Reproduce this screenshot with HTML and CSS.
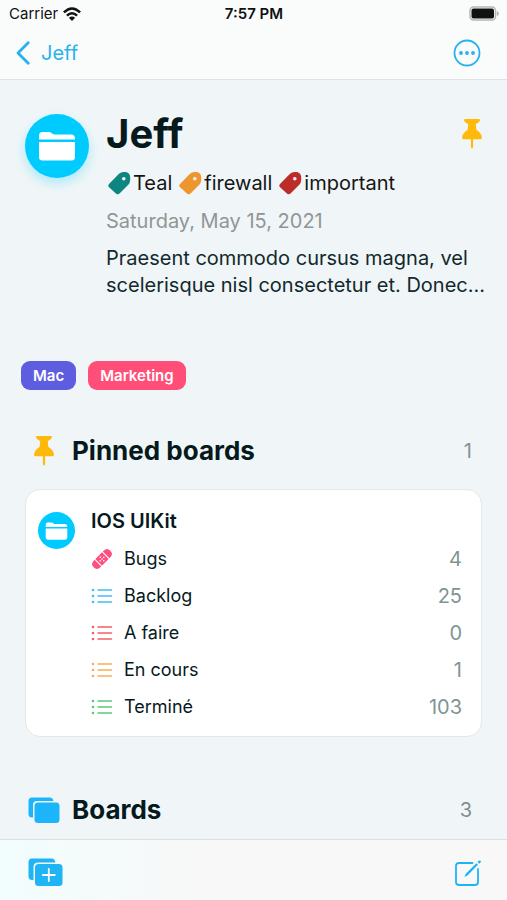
FILE: index.html
```html
<!DOCTYPE html>
<html lang="en">
<head>
<meta charset="utf-8">
<meta name="viewport" content="width=device-width, initial-scale=1">
<title>Jeff</title>
<link rel="stylesheet" href="styles.css">
</head>
<body>
<svg class="sprite" aria-hidden="true">
  <symbol id="folder" viewBox="0 0 38 30">
    <path d="M1 8V4.500Q1 1 4.500 1H11Q12.500 1 13.500 2L14.500 2.800Q15.300 3.500 16.500 3.500H33Q37 3.500 37 7.500V8.500H1Z"/>
    <path d="M1 11H37V26Q37 29.500 33.500 29.500H4.500Q1 29.500 1 26Z"/>
  </symbol>
  <symbol id="tag" viewBox="0 0 24 24">
    <path fill-rule="evenodd" d="M2 13L12 2.800Q14 1 16.500 1H19Q23 2 23.200 6V9Q23 12 21.500 13.500L12.500 22.500Q11 24 9.200 22.700L1.800 16Q.400 14.500 2 13ZM16.800 6A1.800 1.800 0 1 0 16.800 9.600A1.800 1.800 0 1 0 16.800 6Z"/>
  </symbol>
  <symbol id="pin" viewBox="0 0 20 30">
    <path d="M3.200 0H16.800Q18 0 18 1.200Q18 2.800 13.800 5.200L14.400 11Q19.500 14 20 18.500Q20 20.300 18.500 20.300H1.500Q0 20.300 0 18.500Q.500 14 5.600 11L6.200 5.200Q2 2.800 2 1.200Q2 0 3.200 0ZM8.900 20H11.100V28L10 30L8.900 28Z"/>
  </symbol>
  <symbol id="list" viewBox="0 0 22 16">
    <path d="M7 2H20.500M7 8H20.500M7 14H20.500" fill="none" stroke="currentColor" stroke-width="1.500" stroke-linecap="round"/>
    <circle cx="2" cy="2" r="1.300"/><circle cx="2" cy="8" r="1.300"/><circle cx="2" cy="14" r="1.300"/>
  </symbol>
  <symbol id="stack" viewBox="0 0 32 27">
    <path d="M4 .500H21.500Q25 .500 25.500 4H9Q5 4 5 8V20.500H4Q.500 20.500 .500 17V4Q.500 .500 4 .500Z"/>
    <rect x="6.500" y="5.500" width="25" height="20.500" rx="3.500"/>
  </symbol>
</svg>

<div class="app">
  <header class="top">
    <div class="status">
      <span class="carrier">Carrier
        <svg class="wifi" viewBox="0 0 18 14" aria-hidden="true"><g fill="none" stroke="currentColor" stroke-width="2.400"><path d="M.900 5.400Q9-2.400 17.100 5.400"/><path d="M3.900 8.700Q9 3.800 14.100 8.700"/></g><path d="M9 14L5.900 10.700Q9 8.100 12.100 10.700Z"/></svg>
      </span>
      <span class="clock">7:57 PM</span>
      <svg class="battery" viewBox="0 0 30 15" aria-hidden="true"><rect x="1" y="1" width="25.500" height="13" rx="3.500" fill="none" stroke="#b4b6b6" stroke-width="1.500"/><rect x="2.500" y="2.500" width="22.500" height="10" rx="2"/><path d="M27.800 5Q30 6 30 7.500T27.800 10Z" fill="#b4b6b6"/></svg>
    </div>
    <nav class="nav">
      <a class="back" href="#"><svg class="chevron" viewBox="0 0 14 24" aria-hidden="true"><path d="M12.200 1.800L2 12L12.200 22.200" fill="none" stroke="currentColor" stroke-width="2.800" stroke-linecap="round" stroke-linejoin="round"/></svg>Jeff</a>
      <button class="icon-button" aria-label="More"><svg class="more" viewBox="0 0 28 28" aria-hidden="true"><circle cx="14" cy="14" r="12.500" fill="none" stroke="currentColor" stroke-width="1.800"/><circle cx="8" cy="14" r="1.900"/><circle cx="14" cy="14" r="1.900"/><circle cx="20" cy="14" r="1.900"/></svg></button>
    </nav>
  </header>

  <main class="content">
    <section class="profile">
      <span class="avatar"><svg class="avatar-folder" aria-hidden="true"><use href="#folder"/></svg></span>
      <div class="profile-text">
        <div class="title-row">
          <h1>Jeff</h1>
          <svg class="pin" aria-hidden="true"><use href="#pin"/></svg>
        </div>
        <ul class="tags">
          <li><svg class="tag teal" aria-hidden="true"><use href="#tag"/></svg>Teal</li>
          <li><svg class="tag orange" aria-hidden="true"><use href="#tag"/></svg>firewall</li>
          <li><svg class="tag red" aria-hidden="true"><use href="#tag"/></svg>important</li>
        </ul>
        <time class="date" datetime="2021-05-15">Saturday, May 15, 2021</time>
        <p class="summary">Praesent commodo cursus magna, vel scelerisque nisl consectetur et. Donec...</p>
      </div>
    </section>

    <div class="chips">
      <span class="chip indigo">Mac</span>
      <span class="chip pink">Marketing</span>
    </div>

    <section>
      <div class="section-head">
        <span class="section-icon"><svg class="pin" aria-hidden="true"><use href="#pin"/></svg></span>
        <h2>Pinned boards</h2>
        <span class="count">1</span>
      </div>
      <article class="card">
        <span class="avatar small"><svg class="avatar-folder" aria-hidden="true"><use href="#folder"/></svg></span>
        <div class="card-body">
          <h3>IOS UIKit</h3>
          <ul class="lists">
            <li><svg class="row-icon bandage" viewBox="0 0 22 22" aria-hidden="true"><g transform="rotate(-45 11 11)"><path d="M5.200 6.300V15.700H4Q-.800 15.700-.800 11T4 6.300ZM16.800 6.300V15.700H18Q22.800 15.700 22.800 11T18 6.300Z"/><rect x="6.300" y="6.300" width="9.400" height="9.400"/><g fill="#fff"><circle cx="11" cy="8.500" r=".800"/><circle cx="8.500" cy="11" r=".800"/><circle cx="11" cy="11" r=".800"/><circle cx="13.500" cy="11" r=".800"/><circle cx="11" cy="13.500" r=".800"/></g></g></svg><span>Bugs</span><span class="count">4</span></li>
            <li><svg class="row-icon list blue" aria-hidden="true"><use href="#list"/></svg><span>Backlog</span><span class="count">25</span></li>
            <li><svg class="row-icon list coral" aria-hidden="true"><use href="#list"/></svg><span>A faire</span><span class="count">0</span></li>
            <li><svg class="row-icon list amber" aria-hidden="true"><use href="#list"/></svg><span>En cours</span><span class="count">1</span></li>
            <li><svg class="row-icon list green" aria-hidden="true"><use href="#list"/></svg><span>Terminé</span><span class="count">103</span></li>
          </ul>
        </div>
      </article>
    </section>

    <section class="boards">
      <div class="section-head">
        <span class="section-icon"><svg class="stack" aria-hidden="true"><use href="#stack"/></svg></span>
        <h2>Boards</h2>
        <span class="count gray">3</span>
      </div>
    </section>
  </main>

  <footer class="toolbar">
    <button class="icon-button" aria-label="Add board"><svg class="add" viewBox="0 0 35 29" aria-hidden="true"><path d="M4 .500H23.500Q27 .500 27.300 4.500H10Q5.500 4.500 5.500 9V22H4Q.500 22 .500 18V4Q.500 .500 4 .500Z"/><rect x="7" y="6" width="27.500" height="22" rx="3.500"/><path d="M20.800 11V23M14.800 17H26.800" stroke="#fff" stroke-width="1.800" stroke-linecap="round"/></svg></button>
    <button class="icon-button" aria-label="Compose"><svg class="compose" viewBox="0 0 28 28" aria-hidden="true"><g fill="none" stroke="currentColor" stroke-width="1.800" stroke-linecap="round"><path d="M18.500 4H5Q2 4 2 7V23Q2 26 5 26H21Q24 26 24 23V10"/></g><path d="M10.500 18L11.700 14.800L22.400 4.200L24 5.800L13.500 16.500ZM23.500 3L24.700 1.800Q25.800 1 26.600 1.800T26.500 3.500L25.200 4.700Z"/></svg></button>
  </footer>
</div>
</body>
</html>
```
FILE: styles.css
```css
* { box-sizing: border-box; }
body {
  margin: 0;
  background: #f0f6f7;
  color: #06191d;
  font-family: Inter, "Liberation Sans", sans-serif;
  font-size: 20px;
}
h1, h2, h3, p, ul { margin: 0; padding: 0; }
ul { list-style: none; }
svg { display: block; flex: none; fill: currentColor; }
.sprite { position: absolute; width: 0; height: 0; }

.app { height: 100vh; display: flex; flex-direction: column; }
.top { background: #fafcfc; border-bottom: 1px solid #e0e3e4; }
.status {
  display: grid;
  grid-template-columns: 1fr auto 1fr;
  align-items: center;
  height: 27px;
  padding: 0 8px 0 9px;
  color: #111;
  font-size: 15px;
}
.carrier { display: flex; align-items: center; gap: 5px; }
.wifi { width: 18px; height: 14px; }
.clock { font-weight: 600; }
.battery { width: 30px; height: 15px; justify-self: end; }
.nav {
  display: flex;
  align-items: center;
  justify-content: space-between;
  height: 52px;
  padding: 0 26px 0 16px;
  color: #28b1ee;
}
.back { display: flex; align-items: center; gap: 11px; color: inherit; text-decoration: none; }
.chevron { width: 14px; height: 24px; }
.icon-button { padding: 0; border: 0; background: none; color: inherit; }
.more { width: 28px; height: 28px; }

.content { flex: 1; min-height: 0; overflow: hidden; padding: 30px 25px 0; }
.profile { display: flex; gap: 17px; }
.avatar {
  display: flex;
  flex: none;
  align-items: center;
  justify-content: center;
  width: 64px;
  height: 64px;
  margin-top: 4px;
  border-radius: 50%;
  background: #00cbff;
  color: #fff;
  box-shadow: 0 5px 12px rgba(0, 203, 255, .3);
}
.avatar-folder { width: 38px; height: 30px; }
.avatar.small { width: 37px; height: 37px; box-shadow: none; }
.small .avatar-folder { width: 23px; height: 18px; }
.profile-text { flex: 1; min-width: 0; }
.title-row { display: flex; align-items: center; justify-content: space-between; height: 48px; }
h1 { font-size: 40px; line-height: 48px; font-weight: 700; }
.pin { width: 20px; height: 30px; color: #ffb90a; }
.tags { display: flex; gap: 6px; margin-top: 11px; padding-left: 1px; line-height: 28px; color: #151515; }
.tags li { display: flex; align-items: center; gap: 2px; }
.tag { width: 24px; height: 24px; }
.teal { color: #0d8580; }
.orange { color: #ee962e; }
.red { color: #bd2c29; }
.date { display: block; margin-top: 10px; line-height: 28px; color: #929596; }
.summary { margin: 10px -20px 0 0; line-height: 27px; color: #12292d; }

.chips { display: flex; gap: 12px; margin: 62px 0 45px -4px; }
.chip {
  padding: 0 12px;
  border-radius: 9px;
  color: #fff;
  font-size: 15px;
  font-weight: 600;
  line-height: 29px;
}
.indigo { background: #5e5de0; }
.pink { background: #ff4f78; }

.section-head { display: flex; align-items: center; height: 32px; padding: 0 10px 0 3px; }
.section-icon { display: flex; justify-content: center; width: 32px; margin-right: 12px; }
h2 { font-size: 26px; line-height: 32px; font-weight: 700; }
.count { margin-left: auto; font-size: 20px; color: #7f9495; }
.gray { color: #858d90; }
.stack { width: 32px; height: 27px; color: #1cb5fc; }

.card {
  display: flex;
  gap: 16px;
  margin-top: 22px;
  padding: 17px 19px 11px 12px;
  border: 1px solid #e2e7e8;
  border-radius: 15px;
  background: #fff;
}
.card .avatar { margin-top: 5px; }
.card-body { flex: 1; }
h3 { font-size: 20px; line-height: 28px; font-weight: 600; }
.lists { margin-top: 5px; }
.lists li { display: flex; align-items: center; gap: 11px; height: 37px; font-size: 18px; }
.row-icon { width: 22px; height: 22px; }
.list { height: 16px; }
.bandage { color: #ff4f80; }
.blue { color: #42bff0; }
.coral { color: #f55f62; }
.amber { color: #f8ae58; }
.green { color: #5bc878; }
.boards { margin-top: 57px; }

.toolbar {
  display: flex;
  align-items: center;
  justify-content: space-between;
  height: 61px;
  padding: 5px 25px 0 28px;
  border-top: 1px solid #dcdfe0;
  background: linear-gradient(90deg, #f2fdfd, #f8f8f8 40%);
  color: #20b4f5;
}
.add { width: 35px; height: 29px; }
.compose { width: 28px; height: 28px; }
```
